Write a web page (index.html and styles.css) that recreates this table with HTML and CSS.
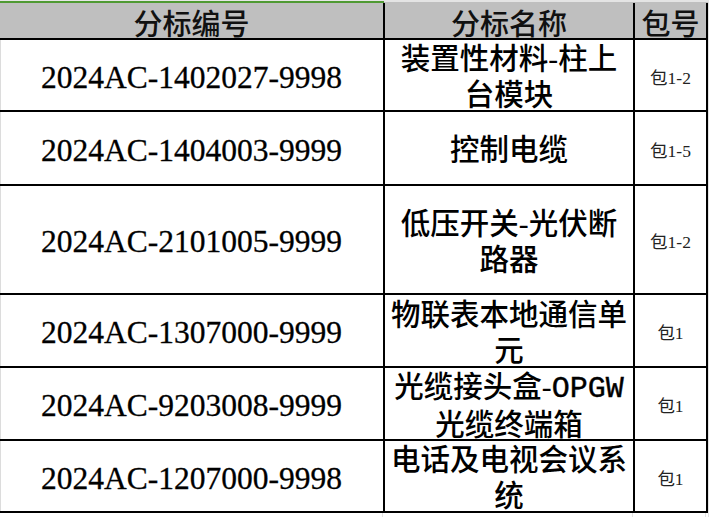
FILE: index.html
```html
<!DOCTYPE html>
<html lang="zh-CN">
<head>
<meta charset="utf-8">
<title>分标</title>
<link rel="stylesheet" href="styles.css">
</head>
<body>
<div class="sheet">
  <div class="topbar">
    <div class="topbar-sel"></div>
    <div class="topbar-rest"></div>
  </div>
  <div class="grid">
    <div class="cell head">分标编号</div>
    <div class="cell head">分标名称</div>
    <div class="cell head">包号</div>

    <div class="cell code">2024AC-1402027-9998</div>
    <div class="cell name"><div class="txt">装置性材料-柱上<br>台模块</div></div>
    <div class="cell pkg">包1-2</div>

    <div class="cell code">2024AC-1404003-9999</div>
    <div class="cell name"><div class="txt">控制电缆</div></div>
    <div class="cell pkg">包1-5</div>

    <div class="cell code">2024AC-2101005-9999</div>
    <div class="cell name"><div class="txt">低压开关-光伏断<br>路器</div></div>
    <div class="cell pkg">包1-2</div>

    <div class="cell code">2024AC-1307000-9999</div>
    <div class="cell name"><div class="txt">物联表本地通信单<br>元</div></div>
    <div class="cell pkg">包1</div>

    <div class="cell code">2024AC-9203008-9999</div>
    <div class="cell name"><div class="txt">光缆接头盒-<span class="latin">OPGW</span><br>光缆终端箱</div></div>
    <div class="cell pkg">包1</div>

    <div class="cell code">2024AC-1207000-9998</div>
    <div class="cell name"><div class="txt">电话及电视会议系<br>统</div></div>
    <div class="cell pkg">包1</div>
  </div>
  <div class="tail">
    <div class="tail-cell"></div>
    <div class="tail-cell"></div>
    <div class="tail-cell"></div>
  </div>
</div>
</body>
</html>
```

FILE: styles.css
```css
html, body {
  margin: 0;
  padding: 0;
  background: #ffffff;
}

body {
  font-family: "Liberation Serif", "Noto Sans CJK SC", serif;
  color: #000;
}

.sheet {
  width: 708px;
  border-right: 1px solid #e2e2e2;
}

.topbar {
  display: flex;
  height: 3px;
}

.topbar-sel {
  width: 384px;
  border-top: 1px solid #e6e6e6;
  background: #4f9a33;
}

.topbar-rest {
  flex: 1;
  border-top: 2px solid #e4e4e4;
  background: #bfbfbf;
}

.grid {
  display: grid;
  grid-template-columns: 383px 248px 71px;
  grid-template-rows: 35px 70px 72px 107px 71px 71px 70px;
  gap: 2px;
  padding: 0 2px 2px 0;
  background: #000;
}

.cell {
  display: flex;
  align-items: center;
  justify-content: center;
  text-align: center;
  background: #fff;
  white-space: nowrap;
}

.head {
  background: #bfbfbf;
  font-family: "Noto Sans CJK SC", sans-serif;
  font-weight: 500;
  font-size: 29px;
  line-height: 34px;
  color: #111;
  padding-top: 2px;
}

.code {
  font-family: "Liberation Serif", serif;
  font-size: 31.5px;
  padding-top: 5px;
  box-shadow: inset 1px 0 0 #dcdcdc;
  -webkit-text-stroke: 0.3px #000;
}

.name {
  font-family: "Liberation Serif", "Noto Sans CJK SC", sans-serif;
  font-weight: 500;
  font-size: 29.5px;
  line-height: 36px;
  padding-top: 4px;
}

.latin {
  font-family: "Liberation Mono", monospace;
  font-weight: 400;
  font-size: 30px;
  -webkit-text-stroke: 0.4px #000;
}

.pkg {
  font-family: "Liberation Serif", "Noto Sans CJK SC", serif;
  font-size: 17.5px;
  color: #222;
  padding-top: 2px;
}

.tail {
  display: grid;
  grid-template-columns: 383px 250px 73px;
  height: 4px;
}

.tail-cell {
  border-right: 1px solid #e2e2e2;
}
```
